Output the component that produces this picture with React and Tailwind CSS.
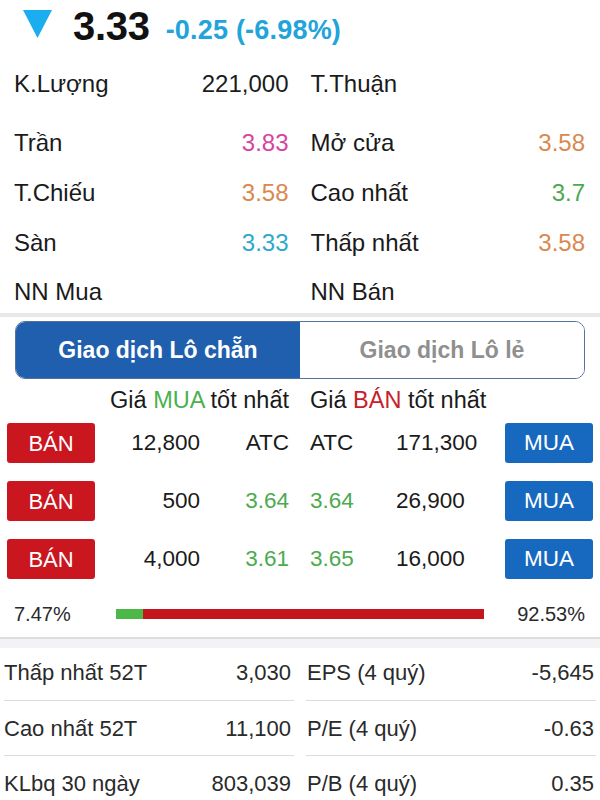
import React from "react";

const info = [
  [
    { label: "K.Lượng", value: "221,000", color: "text-[#1c1c1c]" },
    { label: "T.Thuận", value: "", color: "" },
  ],
  [
    { label: "Trần", value: "3.83", color: "text-[#d6449f]" },
    { label: "Mở cửa", value: "3.58", color: "text-[#d9894f]" },
  ],
  [
    { label: "T.Chiếu", value: "3.58", color: "text-[#d9894f]" },
    { label: "Cao nhất", value: "3.7", color: "text-[#4caa4f]" },
  ],
  [
    { label: "Sàn", value: "3.33", color: "text-[#2ea8cc]" },
    { label: "Thấp nhất", value: "3.58", color: "text-[#d9894f]" },
  ],
  [
    { label: "NN Mua", value: "", color: "" },
    { label: "NN Bán", value: "", color: "" },
  ],
];

const orders = [
  { bVol: "12,800", bPrice: "ATC", sPrice: "ATC", sVol: "171,300", atc: true },
  { bVol: "500", bPrice: "3.64", sPrice: "3.64", sVol: "26,900" },
  { bVol: "4,000", bPrice: "3.61", sPrice: "3.65", sVol: "16,000" },
];

const stats = [
  ["Thấp nhất 52T", "3,030", "EPS (4 quý)", "-5,645"],
  ["Cao nhất 52T", "11,100", "P/E (4 quý)", "-0.63"],
  ["KLbq 30 ngày", "803,039", "P/B (4 quý)", "0.35"],
];

const InfoCell = ({ label, value, color }) => (
  <div className="flex-1 flex items-center justify-between">
    <span>{label}</span>
    <span className={color}>{value}</span>
  </div>
);

export default function App() {
  return (
    <div className="w-[600px] h-[800px] overflow-hidden bg-white text-[#1a1a1a] font-['Liberation_Sans',Arial,sans-serif]">
      {/* price header */}
      <div className="h-[50px] flex items-center pl-[23px]">
        <svg width="29" height="28" viewBox="0 0 29 28" className="mb-[2px]">
          <polygon points="0,0 29,0 14.5,28" fill="#1aaef0" />
        </svg>
        <span className="ml-[21px] mt-[2px] text-[40px] font-bold tracking-[-0.3px] leading-none text-[#111]">
          3.33
        </span>
        <span className="ml-[16px] mt-[10px] text-[27px] font-bold tracking-[0.2px] leading-none text-[#22a4da]">
          -0.25 (-6.98%)
        </span>
      </div>

      {/* summary */}
      <div className="pl-[14px] pr-[15px] pt-[9px] text-[24px]">
        {info.map((row, i) => (
          <div
            key={i}
            className={`flex gap-[22px] items-center ${
              i === 0 ? "h-[50px] mb-[9px]" : i === 4 ? "h-[45px] pt-[3px]" : "h-[50px]"
            }`}
          >
            <InfoCell {...row[0]} />
            <InfoCell {...row[1]} />
          </div>
        ))}
      </div>

      <div className="h-[4px] bg-[#e8e8eb]" />

      {/* tabs */}
      <div className="mt-[4px] mx-[15px] h-[58px] flex rounded-[10px] border-[1.5px] border-[#56729a] overflow-hidden text-[23px] font-bold">
        <div className="w-1/2 bg-[#1f5fad] text-white flex items-center justify-center">
          Giao dịch Lô chẵn
        </div>
        <div className="w-1/2 bg-white text-[#8f8f8f] flex items-center justify-center">
          Giao dịch Lô lẻ
        </div>
      </div>

      {/* order book */}
      <div className="pl-[7px] text-[22.5px]">
        <div className="h-[44px] flex items-center text-[23.5px]">
          <div className="w-[282px] text-right">
            Giá <span className="text-[#4cb04f]">MUA</span> tốt nhất
          </div>
          <div className="ml-[21px]">
            Giá <span className="text-[#c8202a]">BÁN</span> tốt nhất
          </div>
        </div>
        <div className="flex flex-col gap-[18px]">
          {orders.map((o, i) => (
            <div key={i} className="flex items-center h-[40px]">
              <div className="w-[88px] h-[40px] rounded-[3px] bg-[#c9161f] text-white text-[22px] flex items-center justify-center">
                BÁN
              </div>
              <div className="w-[105px] text-right">{o.bVol}</div>
              <div className={`w-[89px] text-right ${o.atc ? "" : "text-[#4caa4f]"}`}>
                {o.bPrice}
              </div>
              <div className={`w-[86px] ml-[21px] ${o.atc ? "" : "text-[#4caa4f]"}`}>
                {o.sPrice}
              </div>
              <div className="w-[109px]">{o.sVol}</div>
              <div className="w-[88px] h-[40px] rounded-[3px] bg-[#1769bf] text-white text-[22.5px] flex items-center justify-center">
                MUA
              </div>
            </div>
          ))}
        </div>
      </div>

      {/* buy/sell ratio */}
      <div className="mt-[20px] h-[30px] pl-[14px] pr-[15px] flex items-center text-[20px] text-[#2a2a2a]">
        <span className="w-[102px]">7.47%</span>
        <div className="w-[368px] h-[10px] flex">
          <div className="w-[7.47%] bg-[#4cb848]" />
          <div className="flex-1 bg-[#c4161c]" />
        </div>
        <span className="flex-1 text-right">92.53%</span>
      </div>

      <div className="mt-[8px] h-[11px] border-t-2 border-[#dedee0] bg-[#f3f3f5]" />

      {/* stats */}
      <div className="px-[4px] text-[22px] text-[#2a2a2a]">
        {stats.map((r, i) => (
          <div key={i} className="flex gap-[12px]">
            {[0, 2].map((k) => (
              <div
                key={k}
                className={`flex-1 flex items-center justify-between ${
                  k === 0 ? "pr-[3px]" : "pl-[1px] pr-[2px]"
                } ${i === 0 ? "h-[52px] pb-[4px]" : "h-[55px] border-t-[1.5px] border-[#dcdcdc]"}`}
              >
                <span>{r[k]}</span>
                <span>{r[k + 1]}</span>
              </div>
            ))}
          </div>
        ))}
      </div>
    </div>
  );
}
